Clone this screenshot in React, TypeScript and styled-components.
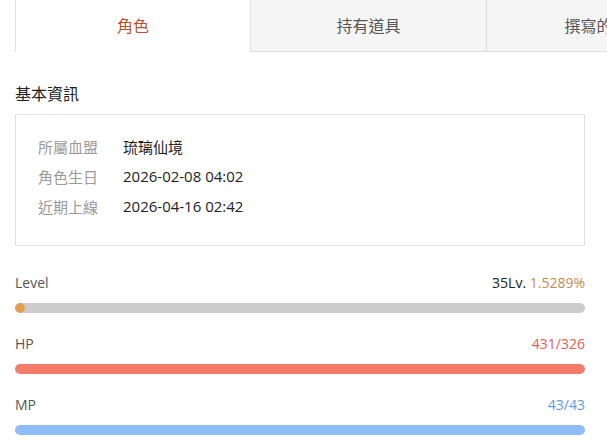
import React from "react";
import styled, { createGlobalStyle } from "styled-components";

const Global = createGlobalStyle`
  html, body { margin: 0; padding: 0; background: #fff; overflow: hidden; }
  body { font-family: "Open Sans", "Noto Sans CJK TC", sans-serif; color: #333; }
`;

const Page = styled.div`
  padding: 0 22px 0 15px;
  width: 570px;
`;

const TabBar = styled.div`
  display: flex;
  width: 570px;
  overflow: visible;
  height: 52px;
`;

const Tab = styled.div<{ $active?: boolean }>`
  flex: 0 0 auto;
  width: ${(p) => (p.$active ? "235px" : "236px")};
  height: 52px;
  box-sizing: border-box;
  display: flex;
  align-items: center;
  justify-content: center;
  font-family: "Noto Sans CJK TC", sans-serif;
  font-size: 16px;
  padding-bottom: 2px;
  border-left: 1px solid ${(p) => (p.$active ? "#e4e4e4" : "#dedede")};
  border-bottom: ${(p) => (p.$active ? "none" : "1px solid #dedede")};
  background: ${(p) => (p.$active ? "#fff" : "#f5f5f5")};
  color: ${(p) => (p.$active ? "#b5512f" : "#555")};
  white-space: nowrap;
`;

const SectionTitle = styled.div`
  margin-top: 29px;
  font-family: "Noto Sans CJK TC", sans-serif;
  font-size: 16px;
  line-height: 24px;
  color: #222;
`;

const InfoBox = styled.div`
  margin-top: 9px;
  border: 1px solid #e3e3e3;
  padding: 16px 22px 24px;
  display: grid;
  grid-template-columns: 85px 1fr;
  grid-auto-rows: 30px;
  align-items: center;
`;

const Label = styled.div`
  font-family: "Noto Sans CJK TC", sans-serif;
  font-size: 15px;
  color: #9a9a9a;
`;

const Value = styled.div`
  font-family: "Open Sans", "Noto Sans CJK TC", sans-serif;
  font-size: 15px;
  color: #222;
`;

const Stats = styled.div`
  margin-top: 27px;
  display: flex;
  flex-direction: column;
  gap: 21px;
`;

const Stat = styled.div`
  display: flex;
  flex-direction: column;
  gap: 10px;
`;

const StatHead = styled.div`
  display: flex;
  justify-content: space-between;
  font-size: 14px;
  line-height: 20px;
  color: #555;
`;

const StatValue = styled.span<{ $color: string }>`
  color: ${(p) => p.$color};
`;

const Track = styled.div`
  height: 10px;
  border-radius: 5px;
  background: #cccccc;
  overflow: hidden;
`;

const Fill = styled.div<{ $color: string }>`
  height: 100%;
  min-width: 10px;
  border-radius: 5px;
  background: ${(p) => p.$color};
`;

export default function App() {
  const info = [
    ["所屬血盟", "琉璃仙境"],
    ["角色生日", "2026-02-08 04:02"],
    ["近期上線", "2026-04-16 02:42"],
  ];
  return (
    <>
      <Global />
      <Page>
        <TabBar>
          <Tab $active>角色</Tab>
          <Tab>持有道具</Tab>
          <Tab>撰寫的文章</Tab>
        </TabBar>
        <SectionTitle>基本資訊</SectionTitle>
        <InfoBox>
          {info.map(([l, v]) => (
            <React.Fragment key={l}>
              <Label>{l}</Label>
              <Value>{v}</Value>
            </React.Fragment>
          ))}
        </InfoBox>
        <Stats>
          <Stat>
            <StatHead>
              <span>Level</span>
              <span>
                <StatValue $color="#222">35Lv.</StatValue>{" "}
                <StatValue $color="#c48a52">1.5289%</StatValue>
              </span>
            </StatHead>
            <Track>
              <Fill $color="#e0a050" style={{ width: "1.5289%" }} />
            </Track>
          </Stat>
          <Stat>
            <StatHead>
              <span>HP</span>
              <StatValue $color="#e0604e">431/326</StatValue>
            </StatHead>
            <Track>
              <Fill $color="#f47c68" style={{ width: "100%" }} />
            </Track>
          </Stat>
          <Stat>
            <StatHead>
              <span>MP</span>
              <StatValue $color="#5f9be8">43/43</StatValue>
            </StatHead>
            <Track>
              <Fill $color="#8fbdf7" style={{ width: "100%" }} />
            </Track>
          </Stat>
        </Stats>
      </Page>
    </>
  );
}
